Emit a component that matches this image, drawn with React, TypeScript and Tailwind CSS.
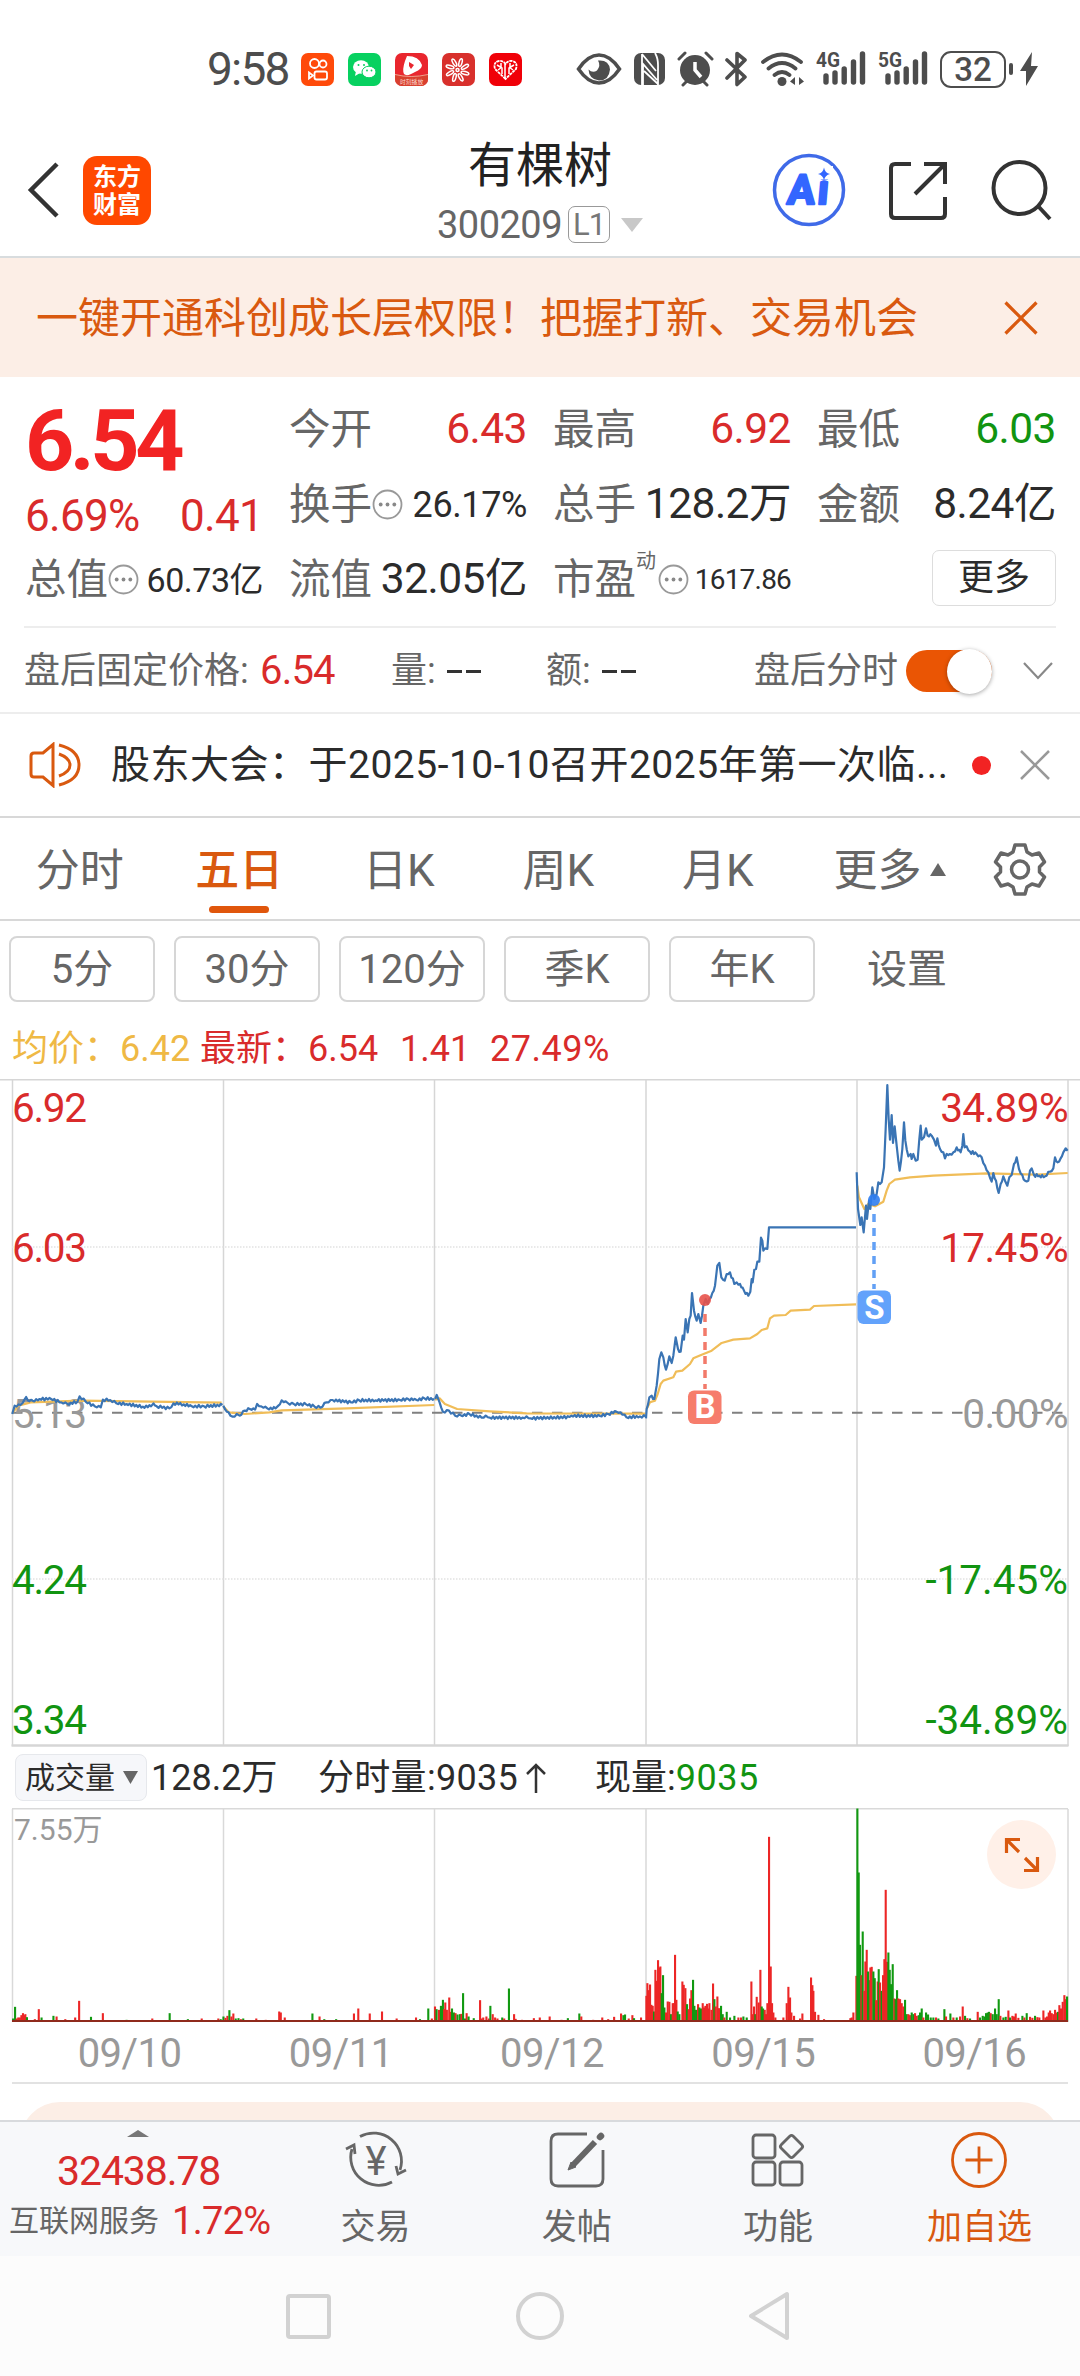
import type { ReactNode } from 'react';

const RED = '#d92b2b';
const GREEN = '#119411';
const ORANGE = '#d9590f';

/* ---------- chart data ---------- */

interface Session {
  transform: string;
  jitter: number;
  price: string;
  average: string;
}

const LEFT = 'translate(0 -10) scale(0.40816 0.33333)';
const RIGHT = 'translate(620 -10) scale(0.33333)';

const sessions: Session[] = [
  {
    transform: LEFT,
    jitter: 4,
    price:
      '30,1035 36,1010 50,1008 60,992 64,984 68,994 80,995 97,990 125,990 150,1000 165,1005 190,998 195,982 210,998 232,1012 247,1015 252,992 270,993 285,1003 310,1005 350,1013 370,1012 376,1003 384,1012 415,1018 425,1003 450,1006 470,1012 500,1012 545,1008',
    average: '30,1032 45,1010 75,1000 200,995 543,1001',
  },
  {
    transform: LEFT,
    jitter: 4,
    price:
      '547,1010 552,1022 560,1030 570,1043 580,1035 587,1040 600,1025 612,1020 625,1022 630,1005 640,1012 655,1018 675,1018 682,1010 690,994 705,1002 720,1005 750,1006 770,1012 785,1016 800,1000 815,993 860,1000 880,994 920,994 980,993 1000,990 1020,993 1040,988 1064,990',
    average: '547,1012 560,1030 600,1035 660,1030 690,1024 850,1018 1064,1008',
  },
  {
    transform: LEFT,
    jitter: 4,
    price:
      '1066,990 1070,978 1077,1000 1085,1028 1100,1025 1115,1040 1130,1040 1150,1035 1180,1046 1190,1040 1200,1046 1280,1046 1290,1042 1300,1048 1395,1044 1400,1040 1470,1041 1490,1035 1510,1028 1520,1030 1535,1045 1568,1042 1582,1043',
    average: '1066,992 1077,988 1090,1005 1120,1020 1200,1027 1290,1033 1582,1034',
  },
  {
    transform: RIGHT,
    jitter: 5,
    price:
      '78,1048 80,1020 88,985 95,980 103,990 110,950 118,870 124,850 130,865 138,902 148,862 155,882 160,860 167,805 174,840 182,848 188,800 192,812 197,750 203,790 208,750 212,740 216,672 222,725 230,755 235,735 242,762 250,710 257,690 263,705 268,690 277,672 285,650 292,590 298,582 304,625 314,635 320,615 330,610 343,645 350,640 360,645 372,665 385,680 391,668 395,630 398,640 403,602 408,600 412,578 418,578 423,506 427,515 430,545 435,538 442,540 447,475 448,475 708,475',
    average:
      '80,1020 90,1000 105,995 113,975 122,945 130,935 160,925 168,908 187,905 210,885 220,868 245,857 275,845 305,822 340,812 390,808 412,795 425,783 442,778 450,748 462,740 497,738 512,725 570,722 582,711 708,706',
  },
  {
    transform: RIGHT,
    jitter: 5,
    price:
      '710,310 714,420 721,468 725,445 731,490 738,410 741,450 747,395 751,420 757,355 763,390 770,375 775,340 780,345 785,340 792,295 797,180 802,48 806,150 810,212 815,138 819,222 824,172 830,230 835,275 839,305 847,240 852,160 856,215 865,262 872,255 875,270 880,255 887,275 893,272 898,210 902,170 905,212 912,205 918,178 923,200 935,200 942,212 948,230 952,208 960,240 970,250 975,268 980,255 990,255 1000,250 1010,235 1022,250 1027,230 1030,195 1034,235 1040,232 1050,248 1070,255 1085,265 1095,290 1105,310 1115,338 1120,312 1128,335 1136,372 1142,345 1150,322 1155,335 1162,350 1168,325 1175,318 1182,285 1190,265 1197,300 1207,318 1215,335 1225,335 1230,305 1235,298 1242,318 1258,320 1275,322 1290,308 1300,298 1305,265 1313,280 1322,268 1330,250 1337,238 1343,245',
    average:
      '712,350 717,385 733,420 745,405 765,412 790,398 800,365 808,345 825,332 870,325 940,320 1100,313 1250,317 1343,312',
  },
];

// Adds tick noise between the recorded turning points.
function withTicks(points: string, jitter: number) {
  const pts = points.split(' ').map((p) => p.split(',').map(Number));
  const out: string[] = [];
  pts.forEach(([x, y], i) => {
    out.push(`${x},${y}`);
    const next = pts[i + 1];
    // the limit-up stretch is flat
    if (!next || next[0] - x > 200) return;
    const steps = Math.floor((next[0] - x) / 4);
    for (let s = 1; s < steps; s++) {
      const t = s / steps;
      const wobble = (s % 2 ? 1 : -1) * jitter * (0.4 + 0.6 * Math.abs(Math.sin(x + s * 7)));
      out.push(`${(x + (next[0] - x) * t).toFixed(1)},${(y + (next[1] - y) * t + wobble).toFixed(1)}`);
    }
  });
  return out.join(' ');
}

// position:top, a trailing "g" marks a falling minute
const volumeEarly =
  '33:118g 38:83g 42:118 46:115 50:115 54:108 58:102 62:108 64:105 68:114g 88:120 98:90 105:115g 135:110g 143:112 165:120 190:115 200:65 230:113g 260:102 320:122g 385:118 429:102g 475:120g 510:118 552:118 558:120g 565:112g 570:116 575:110 580:93g 585:112 590:103 596:118g 603:117g 609:120 615:118g 648:118 672:122 706:97 710:100 720:115 790:103g 808:112 820:120g 850:120g 895:103 906:88 935:103 966:97 1003:118 1052:115 1062:120g 1083:88g 1092:118 1100:82 1104:90g 1110:92 1115:80g 1120:62g 1123:90 1126:70 1130:92 1136:55 1140:98 1143:88g 1148:100g 1152:102 1157:106g 1163:105g 1167:104 1171:42g 1176:118g 1180:102 1185:112g 1198:117g 1214:63 1218:118 1222:115 1230:112 1236:118 1240:80g 1246:105 1252:115 1258:118 1270:115g 1275:118 1287:28g 1300:105 1304:119 1320:122 1350:117 1365:115 1390:112 1420:122 1436:117g 1465:103g 1470:112 1500:122 1523:115 1538:120 1553:113';

const volumeLate =
  '3:643 10:648g 15:646g 26:658 37:648 42:657g 63:655 79:590 82:552 86:573 90:556 94:617 98:620 102:637g 106:512 110:545 114:483 118:505 121:502 125:582g 129:528g 133:625g 138:640 143:607 148:608 153:645g 158:612 162:612 165:467 169:602 173:637g 178:645g 187:547 191:557 196:567 201:615g 206:630 210:598 214:573 219:542g 223:620g 228:632g 234:615 238:625g 243:628g 248:612 252:625 256:620 261:614 265:628 268:612 274:632 279:553 283:600g 287:622 292:592 297:627 303:620g 308:645g 313:655 320:638g 330:655g 343:650g 355:655 363:655 370:652g 380:655g 394:547 398:645 402:622 406:645g 410:593 416:610 421:512 425:622g 429:628g 434:632 438:645 442:612 447:113 452:502 456:612 460:640 466:655 490:655 500:612 505:563 510:595 514:640 522:650 540:658 547:643 573:535 577:558 580:575 585:638 595:647 612:660 691:657 695:655 700:640 ' +
  '709:530 712:28g 716:220g 720:437g 724:528 728:397g 733:575 736:487 740:452 744:517g 747:543g 751:505 755:503 760:517g 764:537g 768:603 773:547 776:510g 780:550 785:575g 789:528 793:480 797:272 801:488 805:460g 809:512g 813:555g 818:495g 823:598 827:600g 831:573g 835:598 840:600 845:612 850:622 855:602g 860:645g 865:645 870:648 875:640g 880:645g 885:642 890:650 896:648g 900:640g 905:628g 910:655 918:640g 924:646g 932:655g 940:655g 948:655 955:658g 973:630g 978:652 991:643g 1000:655 1010:655g 1020:652 1028:622 1035:650g 1042:657 1050:658g 1073:638 1080:655g 1088:650g 1093:652g 1098:642g 1103:640g 1107:638g 1112:642 1118:645g 1125:628g 1130:645g 1136:600g 1141:650 1150:655g 1157:653g 1165:634 1170:655g 1177:650 1182:652 1187:643 1195:656 1207:650g 1213:655 1220:642g 1230:653 1237:656 1245:650g 1252:654 1258:655 1270:634 1276:655 1281:652 1286:640 1290:634 1295:642 1300:645 1305:632 1309:640 1314:638g 1318:618 1323:628 1328:608 1333:588 1337:600 1341:592g';

function bars(data: string, x0: number, xScale: number, base: number) {
  return data.split(' ').map((entry) => {
    const [x, top] = entry.split(':');
    return {
      x: x0 + Number(x) / xScale,
      h: (base - parseInt(top, 10)) / 3,
      down: top.endsWith('g'),
    };
  });
}

const volumeBars = [...bars(volumeEarly, 0, 2.529, 127), ...bars(volumeLate, 620, 3, 667)];

const columnLines = [12.5, 223.5, 434.5, 646, 857, 1068];

/* ---------- small parts ---------- */

function MoreDot() {
  return (
    <svg className="h-[31px] w-[31px] shrink-0" viewBox="0 0 31 31">
      <circle cx="15.5" cy="15.5" r="14" fill="none" stroke="#999" strokeWidth="1.8" />
      <circle cx="8.7" cy="15.5" r="1.9" fill="#888" />
      <circle cx="15.5" cy="15.5" r="1.9" fill="#888" />
      <circle cx="22.3" cy="15.5" r="1.9" fill="#888" />
    </svg>
  );
}

function Signal({ label }: { label: string }) {
  return (
    <svg className="h-[40px] w-[52px]" viewBox="0 0 52 40">
      <text x="0" y="18" fontSize="20" fontWeight="700" fill="#4d4d4d" textLength="24" lengthAdjust="spacingAndGlyphs">
        {label}
      </text>
      <g stroke="#4d4d4d" strokeWidth="5.4" strokeLinecap="round">
        <path d="M10 27v6M19 24v9M28.2 20v13M37.5 13v20M46.500 5v28" />
      </g>
    </svg>
  );
}

function AppIcon({ className, children }: { className: string; children: ReactNode }) {
  return (
    <div className={`h-[33px] w-[33px] overflow-hidden rounded-[7px] ${className}`}>
      <svg className="h-full w-full" viewBox="0 0 33 33">{children}</svg>
    </div>
  );
}

function StatusBar() {
  return (
    <div className="flex h-[130px] items-start pl-[207px] text-[#4d4d4d]">
      <span className="mt-[45px] w-[84px] text-[46px] leading-[48px] tracking-[-1.8px]">9:58</span>
      <div className="mt-[53px] ml-[10px] flex gap-[14px]">
        <AppIcon className="bg-[#ff4a0a]">
          <g fill="none" stroke="#fff" strokeWidth="1.8">
            <circle cx="13.5" cy="10.5" r="4.5" />
            <circle cx="22" cy="11" r="3.5" />
            <rect x="13.5" y="18.5" width="12.5" height="8" rx="2" />
            <path d="M8 19.500l4 3-4 3z" />
          </g>
        </AppIcon>
        <AppIcon className="bg-[#07d160]">
          <ellipse cx="13" cy="14" rx="8" ry="6.8" fill="#fff" />
          <path d="M8 18l-1 5 5-3z" fill="#fff" />
          <ellipse cx="21" cy="19" rx="7" ry="5.8" fill="#fff" stroke="#07d160" strokeWidth="1" />
          <g fill="#07d160">
            <circle cx="10.5" cy="12" r="1" />
            <circle cx="16" cy="12" r="1" />
            <circle cx="19" cy="17.5" r=".9" />
            <circle cx="23.5" cy="17.5" r=".9" />
          </g>
        </AppIcon>
        <AppIcon className="bg-[#e9262e]">
          <path d="M12 3q12 0 15 9 0 4-7 7-8 5-11 2-2-4 1-13z" fill="#fff" />
          <path d="M14 9l5 3-3 4-2-3z" fill="#e9262e" />
          <path d="M0 21q16 4 33 0v12H0z" fill="#d8402e" />
          <path d="M0 21.500q16 4 33 0" fill="none" stroke="#f7b5a5" strokeWidth=".8" />
          <text x="5" y="30.5" fontSize="5.800" fill="#fbd9cf">时刻播放</text>
        </AppIcon>
        <AppIcon className="bg-[#d8302c]">
          <g fill="none" stroke="#fff" strokeWidth="1.5">
            {[0, 45, 90, 135, 180, 225, 270, 315].map((a) => (
              <ellipse key={a} cx="16.5" cy="9" rx="1.5" ry="4" transform={`rotate(${a + 15} 15.5 17)`} />
            ))}
            <circle cx="15.5" cy="17" r="1.5" />
          </g>
        </AppIcon>
        <AppIcon className="bg-[#f00008]">
          <path
            d="M16.5 26L6 16q-2-7 4-8 4-.5 6.500 3 2.500-3.500 6.500-3 6 1 4 8z"
            fill="none"
            stroke="#fff"
            strokeWidth="1.8"
            strokeDasharray="3 .7"
          />
          <path
            d="M8 12l5 3v6m3-10v14m4-4v-6l5-3M9 17l4-3m11 3l-4-3M12 10v4m9-4v4"
            stroke="#fff"
            strokeWidth="1.5"
            fill="none"
          />
        </AppIcon>
      </div>
      <div className="mt-[49px] ml-[54px] flex h-[40px] items-center">
        <svg className="h-[36px] w-[46px]" viewBox="0 0 46 36">
          <path d="M2.500 18Q12 4 23 4t20.500 14Q34 32 23 32T2.500 18z" fill="none" stroke="#4d4d4d" strokeWidth="3.5" />
          <path d="M22 9.500q11-1 12 9-1 11-11 11-10-1-10.500-11 4 4 8.500 1 4-5 1-10z" fill="#4d4d4d" />
        </svg>
        <svg className="ml-[12px] h-[32px] w-[31px]" viewBox="0 0 31 32">
          <rect width="31" height="32" rx="7" fill="#4d4d4d" />
          <path d="M9 32V11l14 16M8 1l14 17M8 1v31M21 0q3 5 3 12v20M10 18l14 13" fill="none" stroke="#fff" strokeWidth="1.8" />
        </svg>
        <svg className="ml-[12px] h-[36px] w-[38px]" viewBox="0 0 38 36">
          <circle cx="18" cy="19" r="15" fill="#4d4d4d" />
          <path d="M2 8l6-6M29 2l6 6M6 34l4-4M26 30l4 4" stroke="#4d4d4d" strokeWidth="3" strokeLinecap="round" />
          <path d="M18 11v8l6 7" fill="none" stroke="#fff" strokeWidth="3.5" />
        </svg>
        <svg className="ml-[10px] h-[36px] w-[23px]" viewBox="0 0 23 36">
          <path
            d="M2 9l18 17-8 7.500V2.500L20 9 2 27"
            fill="none"
            stroke="#4d4d4d"
            strokeWidth="3.6"
            strokeLinejoin="round"
            strokeLinecap="round"
          />
        </svg>
        <svg className="ml-[12px] h-[36px] w-[46px]" viewBox="0 0 46 36">
          <g fill="none" stroke="#4d4d4d" strokeWidth="3.8" strokeLinecap="round">
            <path d="M3 11q19-15 38 0M8.500 17.500q13.500-11 27 0M14.500 24q7.500-6 15 0" />
          </g>
          <circle cx="22" cy="30.5" r="4.5" fill="#4d4d4d" />
          <path d="M35 26v8l-5-3.500zM39 26v8l5-3.500z" fill="#4d4d4d" />
        </svg>
        <div className="ml-[10px]"><Signal label="4G" /></div>
        <div className="ml-[10px]"><Signal label="5G" /></div>
        <div className="ml-[10px] flex h-[37px] w-[66px] items-center justify-center rounded-[11px] border-[2.5px] border-[#4d4d4d] text-[33px] font-medium leading-none">
          32
        </div>
        <div className="ml-[3px] h-[12px] w-[4px] rounded-[2px] bg-[#4d4d4d]" />
        <svg className="ml-[7px] h-[34px] w-[18px]" viewBox="0 0 18 34">
          <path d="M12 0L0 19h6v15l12-20h-7z" fill="#4d4d4d" />
        </svg>
      </div>
    </div>
  );
}

function Header() {
  return (
    <header className="flex h-[128px] items-start border-b-2 border-[#d8dcde]">
      <svg className="mt-[32px] ml-[26px] h-[56px] w-[34px]" viewBox="0 0 34 56">
        <path d="M31 2L5 28l26 26" fill="none" stroke="#333" strokeWidth="4.5" />
      </svg>
      <div className="mt-[26px] ml-[23px] flex h-[69px] w-[68px] flex-col items-center justify-center rounded-[14px] bg-[#ff4800] text-[24px] font-bold leading-[28px] text-white">
        <span>东方</span>
        <span>财富</span>
      </div>
      <div className="ml-[269px] flex w-[240px] flex-col items-center">
        <span className="mt-[8px] text-[48px] leading-[56px] text-[#222]">有棵树</span>
        <div className="mt-[12px] flex h-[37px] items-center">
          <span className="text-[38px] leading-none tracking-[-0.5px] text-[#666]">300209</span>
          <span className="ml-[6px] flex h-[37px] w-[42px] items-center justify-center rounded-[7px] border-[1.5px] border-[#999] text-[31px] leading-none tracking-[-1px] text-[#777]">
            L1
          </span>
          <svg className="ml-[11px] h-[14px] w-[22px]" viewBox="0 0 22 14">
            <path d="M0 0h22L11 14z" fill="#c8c8c8" />
          </svg>
        </div>
      </div>
      <svg className="mt-[23px] ml-[112px] h-[74px] w-[74px]" viewBox="0 0 74 74">
        <circle cx="37" cy="37" r="34.5" fill="none" stroke="#3f6ae8" strokeWidth="3.5" />
        <text
          x="15"
          y="51"
          fontSize="41"
          fontWeight="700"
          fill="#3366ff"
          stroke="#3366ff"
          strokeWidth="2.5"
          strokeLinejoin="round"
          textLength="41"
          transform="skewX(-5) translate(4 0)"
        >
          Ai
        </text>
        {/* the sparkle takes the place of the dot */}
        <rect x="43" y="13" width="18" height="13.5" fill="#fff" />
        <path d="M52 14.500q1 5.500 6 6.500-5 1-6 6.500-1-5.500-6-6.500 5-1 6-6.500z" fill="#3366ff" />
      </svg>
      <svg className="mt-[31px] ml-[42px] h-[60px] w-[60px]" viewBox="0 0 60 60">
        <path d="M23 3H7q-4 0-4 4v46q0 4 4 4h46q4 0 4-4V36M36 3h21v20M57 3L27 33" fill="none" stroke="#333" strokeWidth="4" />
      </svg>
      <svg className="mt-[30px] ml-[43px] h-[62px] w-[62px]" viewBox="0 0 62 62">
        <circle cx="28.5" cy="28" r="26" fill="none" stroke="#333" strokeWidth="4" />
        <path d="M47 46l12 13" stroke="#333" strokeWidth="4" />
      </svg>
    </header>
  );
}

function Banner() {
  return (
    <div className="flex h-[119px] items-center justify-between bg-[#fceee6] pr-[42px] pl-[36px]">
      <span className="pt-[2px] text-[42px] leading-none text-[#d9590f]">一键开通科创成长层权限！把握打新、交易机会</span>
      <svg className="h-[34px] w-[34px]" viewBox="0 0 34 34">
        <path d="M1.500 1.500l31 31M32.500 1.500l-31 31" stroke={ORANGE} strokeWidth="3.2" />
      </svg>
    </div>
  );
}

interface CellProps {
  label: string;
  value: string;
  tone?: string;
  size?: string;
  dot?: boolean;
}

function Cell({ label, value, tone = 'text-[#2b2b2b]', size = 'text-[42.5px] tracking-[-0.5px]', dot = false }: CellProps) {
  return (
    <div className="flex h-[75px] items-center justify-between">
      <span className="flex items-center text-[41.5px] leading-none text-[#666]">
        {label}
        {dot && <MoreDot />}
      </span>
      <span className={`leading-none whitespace-nowrap ${size} ${tone}`}>{value}</span>
    </div>
  );
}

function Quote() {
  return (
    <section className="grid h-[249px] grid-cols-[238px_238px_238px_239px] gap-x-[26px] pt-[15px] pl-[25px]">
      <div>
        <div className="flex h-[97px] items-center text-[86px] leading-none font-bold tracking-[-4.5px] text-[#f22323]">6.54</div>
        <div className="flex h-[53px] items-center justify-between text-[44px] leading-none tracking-[-0.7px] text-[#d92b2b]">
          <span>6.69%</span>
          <span>0.41</span>
        </div>
        <Cell label="总值" value="60.73亿" dot size="text-[34px] tracking-[-0.5px]" />
      </div>
      <div>
        <Cell label="今开" value="6.43" tone="text-[#d92b2b]" />
        <Cell label="换手" value="26.17%" dot size="text-[36px] tracking-[-0.4px]" />
        <Cell label="流值" value="32.05亿" />
      </div>
      <div>
        <Cell label="最高" value="6.92" tone="text-[#d92b2b]" />
        <Cell label="总手" value="128.2万" />
        <div className="flex h-[75px] items-center text-[#666]">
          <span className="text-[41.5px] leading-none">市盈</span>
          <span className="mr-[2px] mb-[38px] text-[20px] leading-none">动</span>
          <MoreDot />
          <span className="ml-auto text-[28px] leading-none tracking-[-0.8px] text-[#2b2b2b]">1617.86</span>
        </div>
      </div>
      <div>
        <Cell label="最低" value="6.03" tone="text-[#119411]" />
        <Cell label="金额" value="8.24亿" />
        <div className="flex h-[75px] items-center justify-end">
          <span className="mb-[3px] flex h-[56px] w-[124px] items-center justify-center rounded-[7px] border border-[#ddd] text-[36px] leading-none text-[#2b2b2b]">
            更多
          </span>
        </div>
      </div>
    </section>
  );
}

function AfterHours() {
  return (
    <div className="mx-[24px] flex h-[86px] items-center border-t-2 border-[#ededed] pt-[2px] text-[36px] leading-none text-[#666]">
      <span className="w-[236px]">盘后固定价格:</span>
      <span className="w-[131px] text-[40px] tracking-[-0.8px] text-[#d92b2b]">6.54</span>
      <span className="w-[56px]">量:</span>
      <Dashes />
      <span className="ml-[65px] w-[56px]">额:</span>
      <Dashes />
      <span className="ml-[118px]">盘后分时</span>
      <div className="ml-[8px] flex h-[42px] w-[86px] items-center justify-end rounded-full bg-[#ea5504]">
        <div className="h-[45px] w-[45px] rounded-full bg-white shadow-[0_1px_4px_rgba(0,0,0,0.35)]" />
      </div>
      <svg className="ml-[31px] h-[18px] w-[30px]" viewBox="0 0 30 18">
        <path d="M1 1l14 15L29 1" fill="none" stroke="#888" strokeWidth="2.2" />
      </svg>
    </div>
  );
}

function Dashes() {
  return (
    <span className="flex gap-[4px]">
      <span className="h-[3px] w-[15px] bg-[#333]" />
      <span className="h-[3px] w-[15px] bg-[#333]" />
    </span>
  );
}

function News() {
  return (
    <div className="flex h-[104px] items-center border-t-2 border-[#ededed] pl-[29px]">
      <svg className="h-[46px] w-[52px]" viewBox="0 0 52 46">
        <g fill="none" stroke={ORANGE} strokeWidth="3">
          <path d="M24 2.500v41L14 35H5q-3 0-3-3V14q0-3 3-3h9z" />
          <path d="M30 3q20 5 20 20T30 43M30 12q11 4 11 11T30 34" />
        </g>
      </svg>
      <span className="ml-[30px] w-[837px] text-[39px] leading-none tracking-[0.5px] whitespace-nowrap text-[#2b2b2b]">
        股东大会：于2025-10-10召开2025年第一次临...
      </span>
      <span className="ml-[24px] h-[19px] w-[19px] rounded-full bg-[#f22323]" />
      <svg className="ml-[29px] h-[30px] w-[30px]" viewBox="0 0 30 30">
        <path d="M1 1l28 28M29 1L1 29" stroke="#999" strokeWidth="2.5" />
      </svg>
    </div>
  );
}

const tabs = ['分时', '五日', '日K', '周K', '月K'];

function Tabs() {
  return (
    <nav className="flex h-[105px] items-start border-y-2 border-[#d8d8d8] text-[44px] leading-none text-[#666]">
      {tabs.map((t) => (
        <div key={t} className="flex w-[159.5px] flex-col items-center pt-[31px]">
          <span className={t === '五日' ? 'font-medium text-[#d9590f]' : ''}>{t}</span>
          {t === '五日' && <span className="mt-[13px] h-[7px] w-[60px] rounded-full bg-[#e0560c]" />}
        </div>
      ))}
      <span className="mt-[31px] ml-[36px]">更多</span>
      <svg className="mt-[45px] ml-[8px] h-[13px] w-[16px]" viewBox="0 0 16 13">
        <path d="M8 0l8 13H0z" fill="#666" />
      </svg>
      <svg className="mt-[24px] ml-[47px] h-[54px] w-[54px]" viewBox="0 0 54 54">
        <path
          d="M22 3h10l2 7 5 3 7-2 5.500 9-5 5v5l5 5-5.500 9-7-2-5 3-2 7H22l-2-7-5-3-7 2L2.500 35l5-5v-5l-5-5L8 11l7 2 5-3z"
          fill="none"
          stroke="#666"
          strokeWidth="3.5"
          strokeLinejoin="round"
        />
        <circle cx="27" cy="27.5" r="8.5" fill="none" stroke="#666" strokeWidth="3.5" />
      </svg>
    </nav>
  );
}

function Periods() {
  return (
    <div className="flex h-[95px] items-center gap-[19px] pl-[9px] text-[40px] leading-none text-[#666]">
      {['5分', '30分', '120分', '季K', '年K'].map((p) => (
        <span
          key={p}
          className="flex h-[66px] w-[146px] items-center justify-center rounded-[8px] border-2 border-[#d6d6d6] pt-[2px]"
        >
          {p}
        </span>
      ))}
      <span className="ml-[33px] pt-[2px]">设置</span>
    </div>
  );
}

function PriceLegend() {
  return (
    <div className="flex h-[63px] items-center pt-[2px] pl-[12px] text-[36px] leading-none text-[#d92b2b]">
      <span className="w-[108px] text-[#efb945]">均价：</span>
      <span className="w-[80px] text-[#efb945]">6.42</span>
      <span className="w-[108px]">最新：</span>
      <span className="w-[92px]">6.54</span>
      <span className="w-[90px]">1.41</span>
      <span className="tracking-[0.5px]">27.49%</span>
    </div>
  );
}

const axisLabels = [
  { y: 43, price: '6.92', pct: '34.89%', fill: RED },
  { y: 183, price: '6.03', pct: '17.45%', fill: RED },
  { y: 349, price: '5.13', pct: '0.00%', fill: '#999' },
  { y: 515, price: '4.24', pct: '-17.45%', fill: GREEN },
  { y: 655, price: '3.34', pct: '-34.89%', fill: GREEN },
];

function PriceChart() {
  return (
    <svg className="block h-[668px] w-[1080px]" viewBox="0 0 1080 668">
      <g stroke="#d6d6d6" strokeWidth="1.5">
        <path d="M0 .8h1080" />
        <path d="M11.500 666.500h1057" strokeWidth="2.5" />
        {columnLines.map((x) => (
          <path key={x} d={`M${x} 1v666`} />
        ))}
        <path d="M12 168h1056M12 500h1056" strokeDasharray="1.5 1.5" stroke="#e2e2e2" />
      </g>
      <path d="M12 333.700h1056" stroke="#808080" strokeWidth="2" strokeDasharray="10.5 9.5" />
      {axisLabels.map((l) => (
        <g key={l.price} fontSize="40.5" fill={l.fill}>
          <text x="12" y={l.y} textLength="75">{l.price}</text>
          <text x="1068" y={l.y} textAnchor="end" letterSpacing={l.pct.startsWith('-') ? 0 : -0.6}>{l.pct}</text>
        </g>
      ))}
      {sessions.map((s, i) => (
        <g key={i} transform={s.transform} fill="none" strokeLinejoin="round">
          <polyline points={s.average} stroke="#f0bd58" strokeWidth="2.2" vectorEffect="non-scaling-stroke" />
          <polyline
            points={withTicks(s.price, s.jitter)}
            stroke="#3a74b4"
            strokeWidth="2.2"
            vectorEffect="non-scaling-stroke"
          />
        </g>
      ))}
      <circle cx="705" cy="221" r="6" fill="#e8524a" fillOpacity=".9" />
      <path d="M705 235v75" stroke="#f27a6a" strokeWidth="3.5" strokeDasharray="8 6" />
      <rect x="688" y="311.5" width="33.5" height="33.5" rx="6" fill="#f67d6c" />
      <text x="705" y="339" fontSize="33" fontWeight="700" fill="#fff" textAnchor="middle">B</text>
      <circle cx="874" cy="121" r="6" fill="#2f7df0" fillOpacity=".9" />
      <path d="M874 135v75" stroke="#62a0f5" strokeWidth="3.5" strokeDasharray="8 6" />
      <rect x="857.5" y="211.5" width="33.5" height="33.5" rx="6" fill="#62a2fb" />
      <text x="874.5" y="239.5" fontSize="33" fontWeight="700" fill="#fff" textAnchor="middle">S</text>
    </svg>
  );
}

function VolumeLegend() {
  return (
    <div className="flex h-[61px] items-center pl-[15px] text-[36px] leading-none text-[#2b2b2b]">
      <span className="flex h-[47px] w-[132px] items-center rounded-[8px] border border-[#e6e8ec] bg-[#f6f7fa] pl-[9px] text-[30px]">
        成交量
        <svg className="ml-[8px] h-[13px] w-[15px]" viewBox="0 0 15 13">
          <path d="M0 0h15L7.500 13z" fill="#666" />
        </svg>
      </span>
      <span className="ml-[4px] w-[167px]">128.2万</span>
      <span className="flex w-[277px] items-center tracking-[0.3px]">
        分时量:9035
        <svg className="ml-[8px] h-[30px] w-[20px]" viewBox="0 0 20 30">
          <path d="M10 30V2M1 11l9-9 9 9" fill="none" stroke="#333" strokeWidth="2.5" />
        </svg>
      </span>
      <span>现量:</span>
      <span className="tracking-[0.5px] text-[#119411]">9035</span>
    </div>
  );
}

function VolumeChart() {
  return (
    <div className="relative h-[215px]">
      <svg className="block h-[215px] w-[1080px]" viewBox="0 0 1080 215">
        <g stroke="#d9d9d9" strokeWidth="1.5">
          <path d="M12 .8h1056" />
          {columnLines.map((x) => (
            <path key={x} d={`M${x} 1v213`} />
          ))}
        </g>
        <text x="14" y="32" fontSize="30" fill="#999">7.55万</text>
        {volumeBars.map((b, i) => (
          <rect key={i} x={b.x - 1} y={213.5 - b.h} width="2.1" height={b.h} fill={b.down ? '#119911' : '#ec2626'} />
        ))}
        <path d="M12 213h1056" stroke="#8f2a1c" strokeWidth="2" />
      </svg>
      <div className="absolute top-[12px] left-[987px] h-[69px] w-[69px] rounded-full bg-[#fff0e8]">
        <svg className="h-full w-full" viewBox="0 0 69 69">
          <path d="M33 19.500H19.500V33M20 20l12 12M37 50.500h13.500V37M50 50L38 38" fill="none" stroke={ORANGE} strokeWidth="3.2" />
        </svg>
      </div>
    </div>
  );
}

function Dates() {
  return (
    <div className="mx-[12px] flex h-[61px] items-center border-b-2 border-[#e2e2e2] pt-[2px] pl-[12px] text-[40px] leading-none tracking-[-0.5px] text-[#999]">
      {['09/10', '09/11', '09/12', '09/15', '09/16'].map((d) => (
        <span key={d} className="w-[211.2px] shrink-0 text-center">{d}</span>
      ))}
    </div>
  );
}

const actions: { label: string; icon: ReactNode; active?: boolean }[] = [
  {
    label: '交易',
    icon: (
      <>
        <path d="M17 7.500A28 28 0 0 1 57 41M49 53A28 28 0 0 1 9 20" />
        <path d="M3 20l8-4 1 9M53 37l2 8 8-4" />
        <text x="33" y="45.5" fontSize="40" textAnchor="middle" fill="currentColor" stroke="none">¥</text>
      </>
    ),
  },
  {
    label: '发帖',
    icon: (
      <>
        <path d="M43 5H14q-7 0-7 7v38q0 7 7 7h38q7 0 7-7V21" />
        <path d="M51 13L29 36" strokeWidth="6" />
        <path d="M56 8l1-1" strokeWidth="6.500" strokeLinecap="round" />
        <path d="M27 33l5 5-8 3z" fill="currentColor" strokeWidth="1" />
      </>
    ),
  },
  {
    label: '功能',
    icon: (
      <>
        <rect x="8" y="6" width="22" height="23" rx="3" />
        <rect x="8" y="33" width="22" height="23" rx="3" />
        <rect x="35" y="33" width="22" height="23" rx="3" />
        <rect x="38" y="9" width="17" height="17" rx="2.5" transform="rotate(45 46.5 17.5)" />
      </>
    ),
  },
  {
    label: '加自选',
    active: true,
    icon: (
      <>
        <circle cx="33" cy="31" r="26.5" />
        <path d="M33 17.500v27M19.500 31h27" />
      </>
    ),
  },
];

function BottomBar() {
  return (
    <footer className="flex h-[136px] border-t-2 border-[#d8dadd] bg-[#f7f8fa]">
      <div className="w-[275px] pl-[9px]">
        <svg className="mt-[8px] ml-[118px] h-[7px] w-[22px]" viewBox="0 0 22 7">
          <path d="M11 0l11 7H0z" fill="#777" />
        </svg>
        <div className="mt-[14px] pl-[48px] text-[41px] leading-[41px] tracking-[-1.1px] text-[#d92b2b]">32438.78</div>
        <div className="mt-[9px] flex h-[40px] items-center">
          <span className="text-[30px] leading-none text-[#666]">互联网服务</span>
          <span className="ml-[13px] text-[38px] leading-none tracking-[-0.7px] text-[#d92b2b]">1.72%</span>
        </div>
      </div>
      {actions.map((a) => (
        <div
          key={a.label}
          className={`flex w-[201.3px] flex-col items-center ${a.active ? 'text-[#d9590f]' : 'text-[#666]'}`}
        >
          <svg
            className="mt-[7px] h-[64px] w-[66px]"
            viewBox="0 0 66 64"
            fill="none"
            stroke="currentColor"
            strokeWidth="2.8"
          >
            {a.icon}
          </svg>
          <span className="mt-[17px] text-[35px] leading-none">{a.label}</span>
        </div>
      ))}
    </footer>
  );
}

function SystemNav() {
  return (
    <div className="flex h-[120px] items-center bg-[#fcfcfc] pl-[286px]">
      <span className="h-[45px] w-[45px] rounded-[4px] border-4 border-[#d2d2d2]" />
      <span className="ml-[185px] h-[48px] w-[48px] rounded-full border-4 border-[#d2d2d2]" />
      <svg className="ml-[183px] h-[50px] w-[44px]" viewBox="0 0 44 50">
        <path d="M40 3v44L4 25z" fill="none" stroke="#d2d2d2" strokeWidth="4" strokeLinejoin="round" />
      </svg>
    </div>
  );
}

export default function App() {
  return (
    <div className="h-[2376px] w-[1080px] overflow-hidden bg-white font-[Roboto,'Noto_Sans_CJK_SC',sans-serif]">
      <StatusBar />
      <Header />
      <Banner />
      <Quote />
      <AfterHours />
      <News />
      <Tabs />
      <Periods />
      <PriceLegend />
      <PriceChart />
      <VolumeLegend />
      <VolumeChart />
      <Dates />
      <div className="h-[36px] overflow-hidden px-[20px] pt-[18px]">
        <div className="h-[80px] rounded-[44px] bg-[#fceee6]" />
      </div>
      <BottomBar />
      <SystemNav />
    </div>
  );
}
